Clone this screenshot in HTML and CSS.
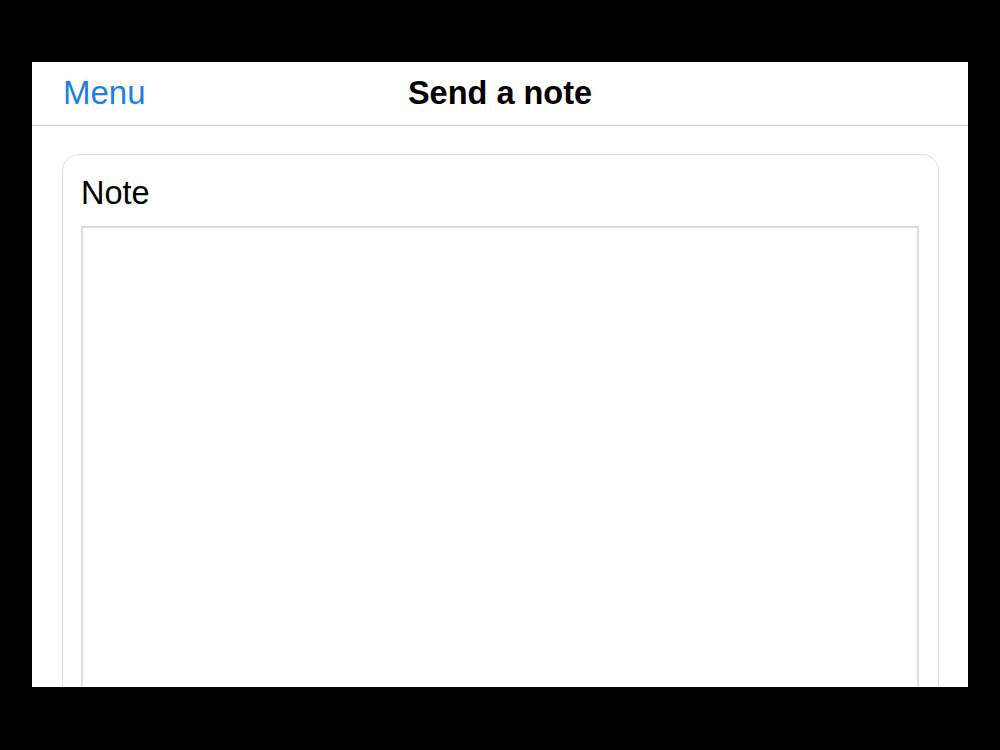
FILE: index.html
```html
<!DOCTYPE html>
<html>
<head>
    <title>Send a note</title>
    <link rel="stylesheet" href="styles.css">
</head>
<body>
    <div class="screen">
        <div class="nav-bar">
            <a class="nav-link" href="#">Menu</a>
            <h1 class="nav-title">Send a note</h1>
        </div>

        <div class="note-card">
            <label class="note-label" for="note">Note</label>
            <textarea id="note" class="note-input"></textarea>
        </div>
    </div>
</body>
</html>
```

FILE: styles.css
```css
html, body {
    margin: 0;
    height: 100%;
    background-color: #000;
}
body {
    font-family: "Liberation Sans", Arial, sans-serif;
    padding-top: 62px;
    padding-left: 32px;
    box-sizing: border-box;
    overflow: hidden;
}
.screen {
    width: 936px;
    height: 625px;
    background-color: #fff;
    overflow: hidden;
}
.nav-bar {
    position: relative;
    height: 63px;
    display: flex;
    align-items: center;
    justify-content: center;
    border-bottom: 1px solid #c8c8c8;
}
.nav-link {
    position: absolute;
    left: 31px;
    top: 12px;
    font-size: 33px;
    line-height: 38px;
    color: #1b80e2;
    text-decoration: none;
}
.nav-title {
    margin: 0;
    font-size: 32.5px;
    line-height: 37px;
    font-weight: bold;
    color: #000;
}
.note-card {
    margin: 28px 29px 0 30px;
    height: 600px;
    padding: 20px 19px 0 18px;
    border: 1.5px solid #dddddd;
    border-radius: 17px;
    display: flex;
    flex-direction: column;
}
.note-label {
    font-size: 32.5px;
    line-height: 37px;
    color: #000;
    margin-bottom: 14px;
}
.note-input {
    flex: 1;
    margin: 0;
    padding: 8px;
    border: 2px solid #dedede;
    border-radius: 0;
    resize: none;
    font-family: inherit;
    font-size: 24px;
    outline: none;
}
```
